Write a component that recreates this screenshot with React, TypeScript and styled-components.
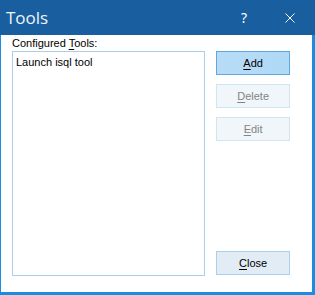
import React from "react";
import styled, { createGlobalStyle } from "styled-components";

const Global = createGlobalStyle`
  html, body { margin: 0; padding: 0; }
  body { width: 315px; height: 295px; overflow: hidden; background: #ffffff; }
`;

const Frame = styled.div`
  width: 315px;
  height: 295px;
  box-sizing: border-box;
  background: #1a8ce4;
  padding: 0 3px 3px 1px;
  display: flex;
  flex-direction: column;
`;

const TitleBar = styled.div`
  height: 35px;
  margin: 0 -3px 0 -1px;
  padding: 0 2px 0 6px;
  background: #195f9f;
  display: flex;
  align-items: center;
  color: #ffffff;
  font-family: "Open Sans", "Noto Sans", sans-serif;
  font-size: 17px;
  flex-shrink: 0;
`;

const Title = styled.div`
  flex: 1;
  margin-top: -1px;
  color: #eef4fa;
`;

const TitleButton = styled.div`
  width: 46px;
  height: 35px;
  display: flex;
  align-items: center;
  justify-content: center;
  font-family: "Noto Sans", sans-serif;
  font-size: 14px;
  color: #ffffff;
`;

const Body = styled.div`
  flex: 1;
  background: #ffffff;
  display: flex;
  padding: 0 22px 16px 11px;
  gap: 11px;
  font-family: "Liberation Sans", Arial, sans-serif;
  font-size: 11px;
  color: #000000;
`;

const LeftCol = styled.div`
  width: 194px;
  display: flex;
  flex-direction: column;
`;

const Label = styled.div`
  height: 16px;
  line-height: 14px;
  padding-top: 1px;
  box-sizing: border-box;
`;

const List = styled.div`
  flex: 1;
  border: 1px solid #a9cfee;
  padding: 4px 3px;
  line-height: 13px;
`;

const RightCol = styled.div`
  width: 74px;
  padding-top: 16px;
  padding-bottom: 1px;
  display: flex;
  flex-direction: column;
  gap: 9px;
`;

type Variant = "default" | "disabled" | "normal";

const Btn = styled.div<{ $variant: Variant }>`
  height: 24px;
  box-sizing: border-box;
  display: flex;
  align-items: center;
  justify-content: center;
  border: 1px solid
    ${(p) =>
      p.$variant === "default" ? "#5ea8e6" : p.$variant === "disabled" ? "#d0e5f4" : "#a9d0ef"};
  background: ${(p) =>
    p.$variant === "default"
      ? "linear-gradient(to right, #b8dcf7, #afd9f6)"
      : p.$variant === "disabled"
      ? "#f0f6fa"
      : "#e1ecf5"};
  color: ${(p) => (p.$variant === "disabled" ? "#848484" : "#000000")};
`;

const CloseBtn = styled(Btn)`
  margin-top: auto;
`;

const U = styled.span`
  text-decoration: underline;
  text-underline-offset: 2px;
`;

export default function App() {
  return (
    <>
      <Global />
      <Frame>
        <TitleBar>
          <Title>Tools</Title>
          <TitleButton>?</TitleButton>
          <TitleButton>
            <svg width="10" height="10" viewBox="0 0 10 10">
              <path d="M0.5 0.5 L9.5 9.5 M9.5 0.5 L0.5 9.5" stroke="#ffffff" strokeWidth="1" fill="none" />
            </svg>
          </TitleButton>
        </TitleBar>
        <Body>
          <LeftCol>
            <Label>
              Configured <U>T</U>ools:
            </Label>
            <List>Launch isql tool</List>
          </LeftCol>
          <RightCol>
            <Btn $variant="default">
              <span>
                <U>A</U>dd
              </span>
            </Btn>
            <Btn $variant="disabled">
              <span>
                <U>D</U>elete
              </span>
            </Btn>
            <Btn $variant="disabled">
              <span>
                <U>E</U>dit
              </span>
            </Btn>
            <CloseBtn $variant="normal">
              <span>
                <U>C</U>lose
              </span>
            </CloseBtn>
          </RightCol>
        </Body>
      </Frame>
    </>
  );
}
